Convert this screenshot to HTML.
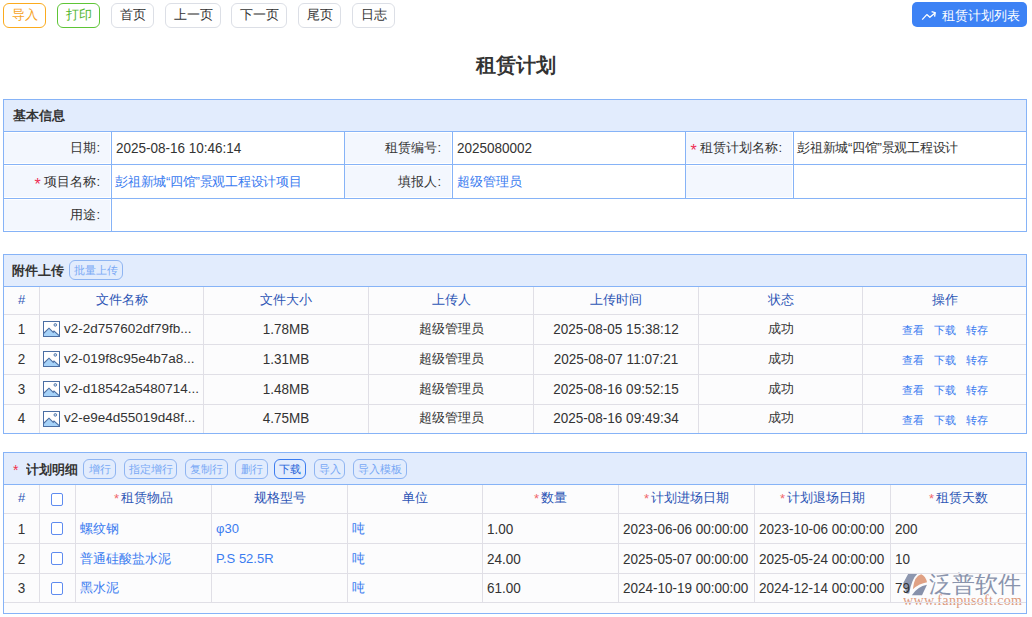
<!DOCTYPE html><html><head><meta charset="utf-8"><style>
html,body{margin:0;padding:0;background:#fff;}
body{width:1032px;height:617px;overflow:hidden;position:relative;font-family:"Liberation Sans",sans-serif;font-size:13px;color:#333;}
.a{position:absolute;box-sizing:border-box;white-space:nowrap;overflow:hidden;}
.btn{border:1px solid #dcdfe6;border-radius:6px;text-align:center;line-height:22px;color:#333;background:#fff;}
.sbtn{border:1px solid #8fb5f2;border-radius:6px;text-align:center;color:#78a8f5;font-size:11px;line-height:18px;background:transparent;}
.req{color:#ee4d5f;}
.rq{color:#ee2d55;position:relative;top:4px;font-size:16px;line-height:1px;}
.rh{color:#f0686c;position:relative;top:1px;margin-right:2px;}
.lk{color:#3a7bf0;}
.th{color:#2c55b5;}
.n{font-size:13.5px;display:inline-block;transform:scaleY(1.13);transform-origin:50% 36%;}
.fn{font-size:13.5px;}
</style></head><body>

<div class="a btn" style="left:3px;top:3px;width:43px;height:25px;border-color:#fbab1e;color:#f6a41f;">导入</div>
<div class="a btn" style="left:57px;top:3px;width:43px;height:25px;border-color:#5ec536;color:#4fb52c;">打印</div>
<div class="a btn" style="left:111px;top:3px;width:43px;height:25px;">首页</div>
<div class="a btn" style="left:165px;top:3px;width:56px;height:25px;">上一页</div>
<div class="a btn" style="left:231px;top:3px;width:56px;height:25px;">下一页</div>
<div class="a btn" style="left:298px;top:3px;width:43px;height:25px;">尾页</div>
<div class="a btn" style="left:352px;top:3px;width:43px;height:25px;">日志</div>
<div class="a " style="left:912px;top:2px;width:115px;height:25px;background:#3d82f5;border-radius:5px;color:#fff;line-height:25px;"><svg style="position:absolute;left:9px;top:8px" width="16" height="12" viewBox="0 0 16 12"><path d="M1.2 9.6 L5.8 4.6 L8.9 7.3 L14 2.9" fill="none" stroke="#fff" stroke-width="1.3" stroke-linejoin="round"/><path d="M10.6 1.6 L14.2 2.7 L13.6 6.7" fill="none" stroke="#fff" stroke-width="1.3"/></svg><span style="position:absolute;left:30px;top:1px">租赁计划列表</span></div>
<div class="a " style="left:416px;top:50px;width:200px;height:30px;text-align:center;line-height:30px;font-size:20px;font-weight:bold;color:#333;">租赁计划</div>
<div class="a " style="left:3px;top:99px;width:1024px;height:133px;border:1px solid #86b3f7;background:#fff;"></div>
<div class="a " style="left:4px;top:100px;width:1022px;height:31px;background:#e2ecfd;"></div>
<div class="a " style="left:4px;top:100px;width:396px;height:31px;text-align:left;padding-left:9px;line-height:31px;font-weight:bold;color:#333;">基本信息</div>
<div class="a " style="left:3px;top:131px;width:1024px;height:1px;background:#86b3f7"></div>
<div class="a " style="left:3px;top:164px;width:1024px;height:1px;background:#86b3f7"></div>
<div class="a " style="left:3px;top:198px;width:1024px;height:1px;background:#86b3f7"></div>
<div class="a " style="left:4px;top:133px;width:106px;height:30px;background:#f3f7fe;"></div>
<div class="a " style="left:345px;top:133px;width:106px;height:30px;background:#f3f7fe;"></div>
<div class="a " style="left:686px;top:133px;width:106px;height:30px;background:#f3f7fe;"></div>
<div class="a " style="left:4px;top:166px;width:106px;height:31px;background:#f3f7fe;"></div>
<div class="a " style="left:345px;top:166px;width:106px;height:31px;background:#f3f7fe;"></div>
<div class="a " style="left:686px;top:166px;width:106px;height:31px;background:#f3f7fe;"></div>
<div class="a " style="left:4px;top:200px;width:106px;height:30px;background:#f3f7fe;"></div>
<div class="a " style="left:111px;top:131px;width:1px;height:68px;background:#86b3f7"></div>
<div class="a " style="left:344px;top:131px;width:1px;height:68px;background:#86b3f7"></div>
<div class="a " style="left:452px;top:131px;width:1px;height:68px;background:#86b3f7"></div>
<div class="a " style="left:685px;top:131px;width:1px;height:68px;background:#86b3f7"></div>
<div class="a " style="left:793px;top:131px;width:1px;height:68px;background:#86b3f7"></div>
<div class="a " style="left:111px;top:198px;width:1px;height:34px;background:#86b3f7"></div>
<div class="a " style="left:4px;top:132px;width:107px;height:32px;text-align:right;padding-right:11px;line-height:32px;">日期:</div>
<div class="a " style="left:112px;top:132px;width:232px;height:32px;text-align:left;padding-left:4px;line-height:32px;"><span class="n">2025-08-16 10:46:14</span></div>
<div class="a " style="left:345px;top:132px;width:107px;height:32px;text-align:right;padding-right:11px;line-height:32px;">租赁编号:</div>
<div class="a " style="left:453px;top:132px;width:232px;height:32px;text-align:left;padding-left:4px;line-height:32px;"><span class="n">2025080002</span></div>
<div class="a " style="left:686px;top:132px;width:107px;height:32px;text-align:right;padding-right:11px;line-height:32px;"><span class="rq">*</span> 租赁计划名称:</div>
<div class="a " style="left:794px;top:132px;width:232px;height:32px;text-align:left;padding-left:3px;line-height:32px;"><span style="letter-spacing:-0.25px">彭祖新城“四馆”景观工程设计</span></div>
<div class="a " style="left:4px;top:165px;width:107px;height:33px;text-align:right;padding-right:11px;line-height:33px;"><span class="rq">*</span> 项目名称:</div>
<div class="a " style="left:112px;top:165px;width:232px;height:33px;text-align:left;padding-left:3px;line-height:33px;"><span class="lk" style="letter-spacing:-0.25px">彭祖新城“四馆”景观工程设计项目</span></div>
<div class="a " style="left:345px;top:165px;width:107px;height:33px;text-align:right;padding-right:11px;line-height:33px;">填报人:</div>
<div class="a " style="left:453px;top:165px;width:232px;height:33px;text-align:left;padding-left:4px;line-height:33px;"><span class="lk">超级管理员</span></div>
<div class="a " style="left:4px;top:199px;width:107px;height:32px;text-align:right;padding-right:11px;line-height:32px;">用途:</div>
<div class="a " style="left:3px;top:254px;width:1024px;height:180px;border:1px solid #86b3f7;background:#fcfcfd;"></div>
<div class="a " style="left:4px;top:255px;width:1022px;height:31px;background:#e2ecfd;"></div>
<div class="a " style="left:4px;top:255px;width:66px;height:31px;text-align:left;padding-left:8px;line-height:31px;font-weight:bold;">附件上传</div>
<div class="a sbtn" style="left:69px;top:260px;width:54px;height:20px;">批量上传</div>
<div class="a " style="left:3px;top:286px;width:1024px;height:1px;background:#86b3f7"></div>
<div class="a " style="left:4px;top:314px;width:1022px;height:1px;background:#e0dfe6"></div>
<div class="a " style="left:4px;top:344px;width:1022px;height:1px;background:#e0dfe6"></div>
<div class="a " style="left:4px;top:374px;width:1022px;height:1px;background:#e0dfe6"></div>
<div class="a " style="left:4px;top:404px;width:1022px;height:1px;background:#e0dfe6"></div>
<div class="a " style="left:39px;top:287px;width:1px;height:146px;background:#e0dfe6"></div>
<div class="a " style="left:203px;top:287px;width:1px;height:146px;background:#e0dfe6"></div>
<div class="a " style="left:368px;top:287px;width:1px;height:146px;background:#e0dfe6"></div>
<div class="a " style="left:533px;top:287px;width:1px;height:146px;background:#e0dfe6"></div>
<div class="a " style="left:698px;top:287px;width:1px;height:146px;background:#e0dfe6"></div>
<div class="a " style="left:862px;top:287px;width:1px;height:146px;background:#e0dfe6"></div>
<div class="a " style="left:4px;top:286px;width:35px;height:27px;text-align:center;line-height:27px;"><span class="th">#</span></div>
<div class="a " style="left:40px;top:286px;width:163px;height:27px;text-align:center;line-height:27px;"><span class="th">文件名称</span></div>
<div class="a " style="left:204px;top:286px;width:164px;height:27px;text-align:center;line-height:27px;"><span class="th">文件大小</span></div>
<div class="a " style="left:369px;top:286px;width:164px;height:27px;text-align:center;line-height:27px;"><span class="th">上传人</span></div>
<div class="a " style="left:534px;top:286px;width:164px;height:27px;text-align:center;line-height:27px;"><span class="th">上传时间</span></div>
<div class="a " style="left:699px;top:286px;width:163px;height:27px;text-align:center;line-height:27px;"><span class="th">状态</span></div>
<div class="a " style="left:863px;top:286px;width:163px;height:27px;text-align:center;line-height:27px;"><span class="th">操作</span></div>
<div class="a " style="left:4px;top:314px;width:35px;height:29px;text-align:center;line-height:29px;"><span class="n">1</span></div>
<div class="a " style="left:40px;top:314px;width:163px;height:29px;line-height:29px;"><svg style="position:absolute;left:3px;top:7px" width="17" height="16" viewBox="0 0 17 16"><rect x="0.5" y="0.5" width="16" height="15" fill="#fff" stroke="#4a6ea3"/><path d="M1 15 L1 12.5 L6 7.5 L10 11.5 L11 10 L16 14.5 L16 15 Z" fill="#a6d2f8"/><path d="M0.5 12.5 L6 7.2 L10.2 11.3 L11 10 L16.5 14.8" fill="none" stroke="#4a6ea3" stroke-width="1.1"/><circle cx="12.3" cy="3.9" r="1.3" fill="#cfe6fb" stroke="#4a6ea3" stroke-width="0.9"/></svg><span class="fn" style="position:absolute;left:24px;top:0">v2-2d757602df79fb...</span></div>
<div class="a " style="left:204px;top:314px;width:164px;height:29px;text-align:center;line-height:29px;"><span class="n">1.78MB</span></div>
<div class="a " style="left:369px;top:314px;width:164px;height:29px;text-align:center;line-height:29px;">超级管理员</div>
<div class="a " style="left:534px;top:314px;width:164px;height:29px;text-align:center;line-height:29px;"><span class="n">2025-08-05 15:38:12</span></div>
<div class="a " style="left:699px;top:314px;width:163px;height:29px;text-align:center;line-height:29px;">成功</div>
<div class="a " style="left:902px;top:316px;width:24px;height:29px;line-height:29px;font-size:11px;color:#3a7bf0;">查看</div>
<div class="a " style="left:934px;top:316px;width:24px;height:29px;line-height:29px;font-size:11px;color:#3a7bf0;">下载</div>
<div class="a " style="left:966px;top:316px;width:24px;height:29px;line-height:29px;font-size:11px;color:#3a7bf0;">转存</div>
<div class="a " style="left:4px;top:344px;width:35px;height:29px;text-align:center;line-height:29px;"><span class="n">2</span></div>
<div class="a " style="left:40px;top:344px;width:163px;height:29px;line-height:29px;"><svg style="position:absolute;left:3px;top:7px" width="17" height="16" viewBox="0 0 17 16"><rect x="0.5" y="0.5" width="16" height="15" fill="#fff" stroke="#4a6ea3"/><path d="M1 15 L1 12.5 L6 7.5 L10 11.5 L11 10 L16 14.5 L16 15 Z" fill="#a6d2f8"/><path d="M0.5 12.5 L6 7.2 L10.2 11.3 L11 10 L16.5 14.8" fill="none" stroke="#4a6ea3" stroke-width="1.1"/><circle cx="12.3" cy="3.9" r="1.3" fill="#cfe6fb" stroke="#4a6ea3" stroke-width="0.9"/></svg><span class="fn" style="position:absolute;left:24px;top:0">v2-019f8c95e4b7a8...</span></div>
<div class="a " style="left:204px;top:344px;width:164px;height:29px;text-align:center;line-height:29px;"><span class="n">1.31MB</span></div>
<div class="a " style="left:369px;top:344px;width:164px;height:29px;text-align:center;line-height:29px;">超级管理员</div>
<div class="a " style="left:534px;top:344px;width:164px;height:29px;text-align:center;line-height:29px;"><span class="n">2025-08-07 11:07:21</span></div>
<div class="a " style="left:699px;top:344px;width:163px;height:29px;text-align:center;line-height:29px;">成功</div>
<div class="a " style="left:902px;top:346px;width:24px;height:29px;line-height:29px;font-size:11px;color:#3a7bf0;">查看</div>
<div class="a " style="left:934px;top:346px;width:24px;height:29px;line-height:29px;font-size:11px;color:#3a7bf0;">下载</div>
<div class="a " style="left:966px;top:346px;width:24px;height:29px;line-height:29px;font-size:11px;color:#3a7bf0;">转存</div>
<div class="a " style="left:4px;top:374px;width:35px;height:29px;text-align:center;line-height:29px;"><span class="n">3</span></div>
<div class="a " style="left:40px;top:374px;width:163px;height:29px;line-height:29px;"><svg style="position:absolute;left:3px;top:7px" width="17" height="16" viewBox="0 0 17 16"><rect x="0.5" y="0.5" width="16" height="15" fill="#fff" stroke="#4a6ea3"/><path d="M1 15 L1 12.5 L6 7.5 L10 11.5 L11 10 L16 14.5 L16 15 Z" fill="#a6d2f8"/><path d="M0.5 12.5 L6 7.2 L10.2 11.3 L11 10 L16.5 14.8" fill="none" stroke="#4a6ea3" stroke-width="1.1"/><circle cx="12.3" cy="3.9" r="1.3" fill="#cfe6fb" stroke="#4a6ea3" stroke-width="0.9"/></svg><span class="fn" style="position:absolute;left:24px;top:0">v2-d18542a5480714...</span></div>
<div class="a " style="left:204px;top:374px;width:164px;height:29px;text-align:center;line-height:29px;"><span class="n">1.48MB</span></div>
<div class="a " style="left:369px;top:374px;width:164px;height:29px;text-align:center;line-height:29px;">超级管理员</div>
<div class="a " style="left:534px;top:374px;width:164px;height:29px;text-align:center;line-height:29px;"><span class="n">2025-08-16 09:52:15</span></div>
<div class="a " style="left:699px;top:374px;width:163px;height:29px;text-align:center;line-height:29px;">成功</div>
<div class="a " style="left:902px;top:376px;width:24px;height:29px;line-height:29px;font-size:11px;color:#3a7bf0;">查看</div>
<div class="a " style="left:934px;top:376px;width:24px;height:29px;line-height:29px;font-size:11px;color:#3a7bf0;">下载</div>
<div class="a " style="left:966px;top:376px;width:24px;height:29px;line-height:29px;font-size:11px;color:#3a7bf0;">转存</div>
<div class="a " style="left:4px;top:404px;width:35px;height:28px;text-align:center;line-height:28px;"><span class="n">4</span></div>
<div class="a " style="left:40px;top:404px;width:163px;height:28px;line-height:28px;"><svg style="position:absolute;left:3px;top:7px" width="17" height="16" viewBox="0 0 17 16"><rect x="0.5" y="0.5" width="16" height="15" fill="#fff" stroke="#4a6ea3"/><path d="M1 15 L1 12.5 L6 7.5 L10 11.5 L11 10 L16 14.5 L16 15 Z" fill="#a6d2f8"/><path d="M0.5 12.5 L6 7.2 L10.2 11.3 L11 10 L16.5 14.8" fill="none" stroke="#4a6ea3" stroke-width="1.1"/><circle cx="12.3" cy="3.9" r="1.3" fill="#cfe6fb" stroke="#4a6ea3" stroke-width="0.9"/></svg><span class="fn" style="position:absolute;left:24px;top:0">v2-e9e4d55019d48f...</span></div>
<div class="a " style="left:204px;top:404px;width:164px;height:28px;text-align:center;line-height:28px;"><span class="n">4.75MB</span></div>
<div class="a " style="left:369px;top:404px;width:164px;height:28px;text-align:center;line-height:28px;">超级管理员</div>
<div class="a " style="left:534px;top:404px;width:164px;height:28px;text-align:center;line-height:28px;"><span class="n">2025-08-16 09:49:34</span></div>
<div class="a " style="left:699px;top:404px;width:163px;height:28px;text-align:center;line-height:28px;">成功</div>
<div class="a " style="left:902px;top:406px;width:24px;height:28px;line-height:28px;font-size:11px;color:#3a7bf0;">查看</div>
<div class="a " style="left:934px;top:406px;width:24px;height:28px;line-height:28px;font-size:11px;color:#3a7bf0;">下载</div>
<div class="a " style="left:966px;top:406px;width:24px;height:28px;line-height:28px;font-size:11px;color:#3a7bf0;">转存</div>
<div class="a " style="left:3px;top:452px;width:1024px;height:162px;border:1px solid #86b3f7;background:#fcfcfd;"></div>
<div class="a " style="left:4px;top:453px;width:1022px;height:31px;background:#e2ecfd;"></div>
<div class="a " style="left:13px;top:460px;width:10px;height:20px;color:#f0304a;font-size:14px;line-height:20px;">*</div>
<div class="a " style="left:26px;top:453px;width:64px;height:31px;text-align:left;padding-left:0px;line-height:31px;font-weight:bold;padding-top:1px;">计划明细</div>
<div class="a sbtn" style="left:83px;top:459px;width:33px;height:20px;">增行</div>
<div class="a sbtn" style="left:124px;top:459px;width:53px;height:20px;">指定增行</div>
<div class="a sbtn" style="left:185px;top:459px;width:43px;height:20px;">复制行</div>
<div class="a sbtn" style="left:235px;top:459px;width:33px;height:20px;">删行</div>
<div class="a sbtn" style="left:274px;top:459px;width:32px;height:20px;border-color:#3b7cf0;color:#2563d9;">下载</div>
<div class="a sbtn" style="left:314px;top:459px;width:31px;height:20px;">导入</div>
<div class="a sbtn" style="left:353px;top:459px;width:54px;height:20px;">导入模板</div>
<div class="a " style="left:3px;top:484px;width:1024px;height:1px;background:#86b3f7"></div>
<svg class="a" style="left:898px;top:566px;" width="36" height="34" viewBox="0 0 36 34"><path d="M10.5 7.2 L19.8 7.2 Q13.5 13 11.2 27.5 L8.5 27.5 L5.3 17 Z" fill="#8791ab" opacity="0.95"/><path d="M14.8 23.2 Q16.5 9.5 23.2 8.3 Q27.8 10.5 29 16.3 Q21.5 17.5 14.8 23.2 Z" fill="#e0a184"/><path d="M13.8 29.3 Q19.5 20.5 29 18.8 L24 29.3 Z" fill="#8791ab"/></svg>
<div class="a" style="left:929px;top:569px;width:100px;height:30px;font-size:23px;line-height:30px;color:#8993ac;">泛普软件</div>
<div class="a" style="left:903px;top:593px;width:125px;height:16px;font-family:'Liberation Serif',serif;font-size:14px;line-height:16px;color:#dc9a7e;letter-spacing:0.35px;">www.fanpusoft.com</div>
<div class="a " style="left:4px;top:513px;width:1022px;height:1px;background:#e0dfe6"></div>
<div class="a " style="left:4px;top:543px;width:1022px;height:1px;background:#e0dfe6"></div>
<div class="a " style="left:4px;top:573px;width:1022px;height:1px;background:#e0dfe6"></div>
<div class="a " style="left:4px;top:602px;width:1022px;height:1px;background:#e0dfe6"></div>
<div class="a " style="left:39px;top:485px;width:1px;height:117px;background:#e0dfe6"></div>
<div class="a " style="left:75px;top:485px;width:1px;height:117px;background:#e0dfe6"></div>
<div class="a " style="left:211px;top:485px;width:1px;height:117px;background:#e0dfe6"></div>
<div class="a " style="left:347px;top:485px;width:1px;height:117px;background:#e0dfe6"></div>
<div class="a " style="left:482px;top:485px;width:1px;height:117px;background:#e0dfe6"></div>
<div class="a " style="left:618px;top:485px;width:1px;height:117px;background:#e0dfe6"></div>
<div class="a " style="left:754px;top:485px;width:1px;height:117px;background:#e0dfe6"></div>
<div class="a " style="left:890px;top:485px;width:1px;height:117px;background:#e0dfe6"></div>
<div class="a " style="left:4px;top:484px;width:35px;height:28px;text-align:center;line-height:28px;"><span class="th">#</span></div>
<div class="a " style="left:76px;top:484px;width:135px;height:28px;text-align:center;line-height:28px;"><span class="th"><span class="rh">*</span>租赁物品</span></div>
<div class="a " style="left:212px;top:484px;width:135px;height:28px;text-align:center;line-height:28px;"><span class="th">规格型号</span></div>
<div class="a " style="left:348px;top:484px;width:134px;height:28px;text-align:center;line-height:28px;"><span class="th">单位</span></div>
<div class="a " style="left:483px;top:484px;width:135px;height:28px;text-align:center;line-height:28px;"><span class="th"><span class="rh">*</span>数量</span></div>
<div class="a " style="left:619px;top:484px;width:135px;height:28px;text-align:center;line-height:28px;"><span class="th"><span class="rh">*</span>计划进场日期</span></div>
<div class="a " style="left:755px;top:484px;width:135px;height:28px;text-align:center;line-height:28px;"><span class="th"><span class="rh">*</span>计划退场日期</span></div>
<div class="a " style="left:891px;top:484px;width:135px;height:28px;text-align:center;line-height:28px;"><span class="th"><span class="rh">*</span>租赁天数</span></div>
<div class="a" style="left:51px;top:493px;width:12px;height:13px;border:1px solid #5f8cf0;border-radius:2px;background:#fff;"></div>
<div class="a " style="left:4px;top:514px;width:35px;height:29px;text-align:center;line-height:29px;"><span class="n">1</span></div>
<div class="a" style="left:51px;top:522px;width:12px;height:13px;border:1px solid #5f8cf0;border-radius:2px;background:#fff;"></div>
<div class="a " style="left:76px;top:514px;width:135px;height:29px;text-align:left;padding-left:4px;line-height:29px;"><span class="lk">螺纹钢</span></div>
<div class="a " style="left:212px;top:514px;width:135px;height:29px;text-align:left;padding-left:4px;line-height:29px;"><span class="lk">φ30</span></div>
<div class="a " style="left:348px;top:514px;width:134px;height:29px;text-align:left;padding-left:4px;line-height:29px;"><span class="lk">吨</span></div>
<div class="a " style="left:483px;top:514px;width:135px;height:29px;text-align:left;padding-left:4px;line-height:29px;"><span class="n">1.00</span></div>
<div class="a " style="left:619px;top:514px;width:135px;height:29px;text-align:left;padding-left:4px;line-height:29px;"><span class="n">2023-06-06 00:00:00</span></div>
<div class="a " style="left:755px;top:514px;width:135px;height:29px;text-align:left;padding-left:4px;line-height:29px;"><span class="n">2023-10-06 00:00:00</span></div>
<div class="a " style="left:891px;top:514px;width:135px;height:29px;text-align:left;padding-left:4px;line-height:29px;"><span class="n">200</span></div>
<div class="a " style="left:4px;top:544px;width:35px;height:29px;text-align:center;line-height:29px;"><span class="n">2</span></div>
<div class="a" style="left:51px;top:552px;width:12px;height:13px;border:1px solid #5f8cf0;border-radius:2px;background:#fff;"></div>
<div class="a " style="left:76px;top:544px;width:135px;height:29px;text-align:left;padding-left:4px;line-height:29px;"><span class="lk">普通硅酸盐水泥</span></div>
<div class="a " style="left:212px;top:544px;width:135px;height:29px;text-align:left;padding-left:4px;line-height:29px;"><span class="lk">P.S 52.5R</span></div>
<div class="a " style="left:348px;top:544px;width:134px;height:29px;text-align:left;padding-left:4px;line-height:29px;"><span class="lk">吨</span></div>
<div class="a " style="left:483px;top:544px;width:135px;height:29px;text-align:left;padding-left:4px;line-height:29px;"><span class="n">24.00</span></div>
<div class="a " style="left:619px;top:544px;width:135px;height:29px;text-align:left;padding-left:4px;line-height:29px;"><span class="n">2025-05-07 00:00:00</span></div>
<div class="a " style="left:755px;top:544px;width:135px;height:29px;text-align:left;padding-left:4px;line-height:29px;"><span class="n">2025-05-24 00:00:00</span></div>
<div class="a " style="left:891px;top:544px;width:135px;height:29px;text-align:left;padding-left:4px;line-height:29px;"><span class="n">10</span></div>
<div class="a " style="left:4px;top:574px;width:35px;height:28px;text-align:center;line-height:28px;"><span class="n">3</span></div>
<div class="a" style="left:51px;top:582px;width:12px;height:13px;border:1px solid #5f8cf0;border-radius:2px;background:#fff;"></div>
<div class="a " style="left:76px;top:574px;width:135px;height:28px;text-align:left;padding-left:4px;line-height:28px;"><span class="lk">黑水泥</span></div>
<div class="a " style="left:212px;top:574px;width:135px;height:28px;text-align:left;padding-left:4px;line-height:28px;"><span class="lk"></span></div>
<div class="a " style="left:348px;top:574px;width:134px;height:28px;text-align:left;padding-left:4px;line-height:28px;"><span class="lk">吨</span></div>
<div class="a " style="left:483px;top:574px;width:135px;height:28px;text-align:left;padding-left:4px;line-height:28px;"><span class="n">61.00</span></div>
<div class="a " style="left:619px;top:574px;width:135px;height:28px;text-align:left;padding-left:4px;line-height:28px;"><span class="n">2024-10-19 00:00:00</span></div>
<div class="a " style="left:755px;top:574px;width:135px;height:28px;text-align:left;padding-left:4px;line-height:28px;"><span class="n">2024-12-14 00:00:00</span></div>
<div class="a " style="left:891px;top:574px;width:135px;height:28px;text-align:left;padding-left:4px;line-height:28px;"><span class="n">79</span></div>
</body></html>
